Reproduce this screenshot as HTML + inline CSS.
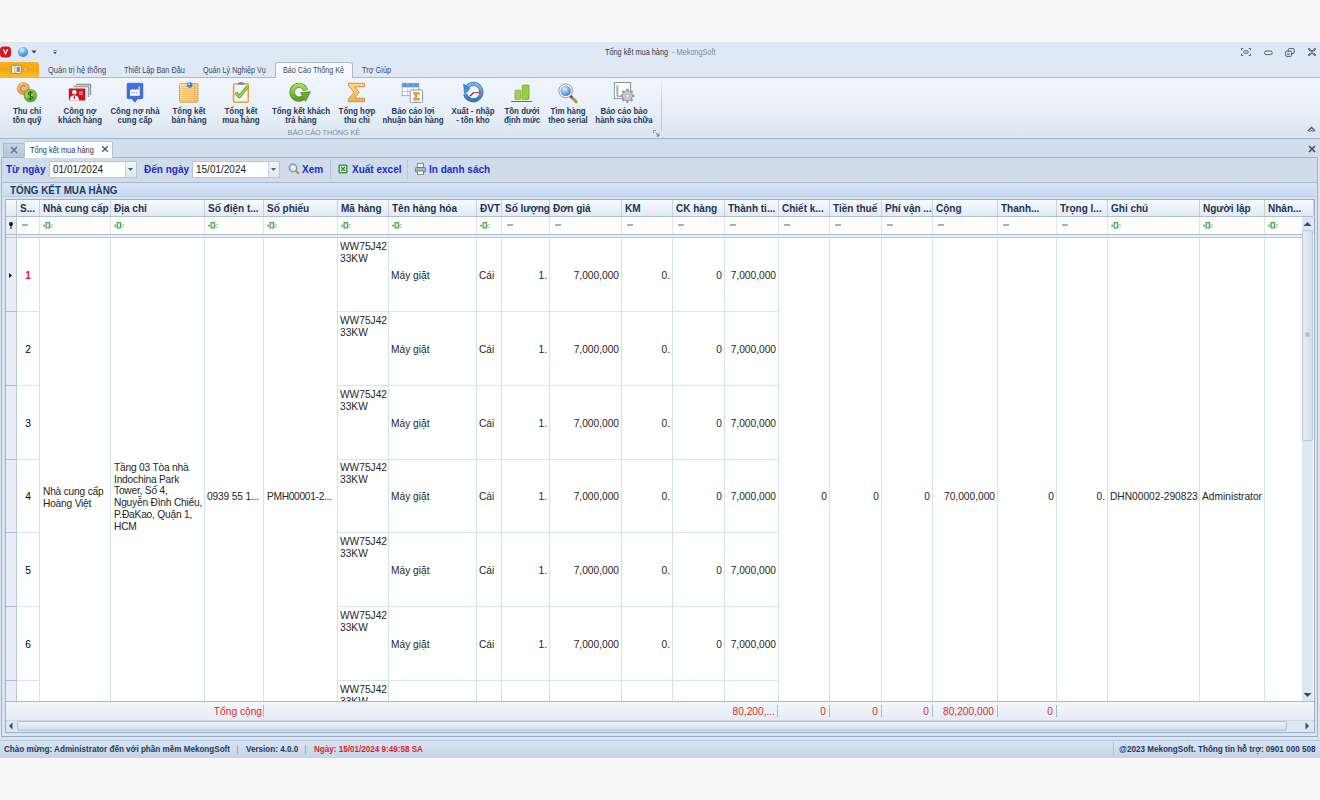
<!DOCTYPE html><html><head><meta charset="utf-8"><style>
*{box-sizing:border-box;margin:0;padding:0}
html,body{width:1320px;height:800px;overflow:hidden;background:#f8f8f8;font-family:"Liberation Sans",sans-serif;font-size:11px;color:#000}
.a{position:absolute;white-space:nowrap}
.t{position:absolute;white-space:nowrap;line-height:12px;font-size:10.2px;color:#262626}
.h{font-size:10px}
</style></head><body>
<div class="a" style="left:0;top:42px;width:1320px;height:716px;background:#dae5f2"></div>
<div class="a" style="left:0;top:42px;width:1320px;height:35px;background:#dfe9f5"></div>
<div class="a" style="left:0;top:77px;width:1320px;height:1px;background:#a9bacf"></div>
<div class="a" style="left:0;top:78px;width:1320px;height:60px;background:linear-gradient(#f1f6fc,#e8eff8 55%,#dae5f1)"></div>
<div class="a" style="left:0;top:138px;width:1320px;height:1px;background:#a3b4ca"></div>
<div class="a" style="left:0;top:139px;width:1320px;height:18px;background:#d2deed"></div>
<div class="a" style="left:1px;top:157px;width:1317px;height:580px;background:#d0dcec;border:1px solid #a2b4cb;border-bottom:2px solid #98abc3"></div>
<div class="a" style="left:0;top:740px;width:1320px;height:18px;background:linear-gradient(#d9e4f2,#c5d4e7);border-top:1px solid #b5c6dc"></div>
<svg class="a" style="left:0;top:46px" width="12" height="12" viewBox="0 0 12 12"><rect x="0" y="0.5" width="11" height="11" rx="3.5" fill="#d9141c"/><path d="M2.6 3 L5.5 9.3 L8.4 3 L7 3 L5.5 6.6 L4 3Z" fill="#fff"/></svg>
<svg class="a" style="left:17px;top:46px" width="12" height="12" viewBox="0 0 12 12"><defs><radialGradient id="bs" cx="0.4" cy="0.3" r="0.7"><stop offset="0" stop-color="#e8f6ff"/><stop offset="0.5" stop-color="#6fb6ec"/><stop offset="1" stop-color="#2d7fc6"/></radialGradient></defs><circle cx="6" cy="6" r="5" fill="url(#bs)"/></svg>
<svg class="a" style="left:31px;top:50px" width="6" height="4" viewBox="0 0 6 4"><path d="M0.5 0.5 L5.5 0.5 L3 3.5Z" fill="#2e3f57"/></svg>
<svg class="a" style="left:52px;top:49px" width="6" height="7" viewBox="0 0 6 7"><rect x="1.4" y="1" width="3.2" height="0.7" fill="#3a4a60"/><path d="M1.2 3 L4.8 3 L3 5.2Z" fill="#3a4a60"/></svg>
<div class="a" style="left:605px;top:46px;font-size:9.5px;line-height:11.5px;color:#303a48;font-weight:normal;transform:scaleX(0.77);transform-origin:0 0;">Tổng kết mua hàng</div>
<div class="a" style="left:672px;top:46px;font-size:9.5px;line-height:11.5px;color:#7a879b;font-weight:normal;transform:scaleX(0.77);transform-origin:0 0;">- MekongSoft</div>
<svg class="a" style="left:1241px;top:48px" width="10" height="8" viewBox="0 0 10 8"><g stroke="#525c6b" stroke-width="1" fill="none"><path d="M0.5 2.3V0.5H2.3M7.7 0.5H9.5V2.3M9.5 5.7V7.5H7.7M2.3 7.5H0.5V5.7"/><rect x="2.9" y="2.7" width="4.2" height="2.6" rx="0.9"/></g></svg>
<svg class="a" style="left:1264px;top:50px" width="9" height="6" viewBox="0 0 9 6"><rect x="0.6" y="1" width="7.6" height="3.6" rx="1.6" stroke="#525c6b" stroke-width="1" fill="none"/></svg>
<svg class="a" style="left:1285px;top:47.5px" width="10" height="9" viewBox="0 0 10 9"><g stroke="#525c6b" stroke-width="1" fill="#dfe9f5"><rect x="3.3" y="0.6" width="5.9" height="5" rx="1"/><rect x="0.6" y="3.2" width="5.9" height="5.2" rx="1"/></g><rect x="2" y="5.3" width="3" height="1.8" fill="#8a93a0"/></svg>
<svg class="a" style="left:1307.5px;top:48px" width="8" height="8" viewBox="0 0 8 8"><path d="M1 1 L7 7 M7 1 L1 7" stroke="#5a6472" stroke-width="1.9" stroke-linecap="round"/><path d="M1.6 1.6 L6.4 6.4 M6.4 1.6 L1.6 6.4" stroke="#c9d2dd" stroke-width="0.45"/></svg>
<div class="a" style="left:0;top:62px;width:39px;height:15px;background:linear-gradient(#f8b126,#f4a410 50%,#f9be2c);border-radius:0 3px 0 0"></div>
<svg class="a" style="left:10px;top:64px" width="20" height="11" viewBox="0 0 20 11"><rect x="1.6" y="1.3" width="9.6" height="8" rx="0.6" fill="#fff" stroke="#7a6a3a" stroke-width="0.7"/><rect x="4.6" y="1.6" width="0.6" height="7.4" fill="#6a5a30"/><rect x="6.6" y="2.6" width="3.3" height="5.4" fill="#8e8e86"/><path d="M13.3 4.3 L17.5 4.3 L15.4 7.1Z" fill="#fde9b0" stroke="#c98a20" stroke-width="0.5"/></svg>
<div class="a" style="left:275px;top:62px;width:78px;height:16px;background:linear-gradient(#fbfdff,#f1f6fc);border:1px solid #a9bacf;border-bottom:none;border-radius:3px 3px 0 0"></div>
<div class="a" style="left:48px;top:65px;font-size:9px;line-height:11px;color:#3a4a60;font-weight:normal;transform:scaleX(0.835);transform-origin:0 0;">Quản trị hệ thống</div>
<div class="a" style="left:124px;top:65px;font-size:9px;line-height:11px;color:#3a4a60;font-weight:normal;transform:scaleX(0.81);transform-origin:0 0;">Thiết Lập Ban Đầu</div>
<div class="a" style="left:203px;top:65px;font-size:9px;line-height:11px;color:#3a4a60;font-weight:normal;transform:scaleX(0.8);transform-origin:0 0;">Quản Lý Nghiệp Vụ</div>
<div class="a" style="left:283px;top:65px;font-size:9px;line-height:11px;color:#3a4a60;font-weight:normal;transform:scaleX(0.8);transform-origin:0 0;">Báo Cáo Thống Kê</div>
<div class="a" style="left:362px;top:65px;font-size:9px;line-height:11px;color:#3a4a60;font-weight:normal;transform:scaleX(0.82);transform-origin:0 0;">Trợ Giúp</div>
<div class="a" style="left:-33px;top:107px;width:120px;text-align:center;font-size:9px;line-height:9px;font-weight:bold;color:#26395a;transform:scaleX(0.88);transform-origin:50% 0">Thu chi<br>tồn quỹ</div>
<div class="a" style="left:19.5px;top:107px;width:120px;text-align:center;font-size:9px;line-height:9px;font-weight:bold;color:#26395a;transform:scaleX(0.88);transform-origin:50% 0">Công nợ<br>khách hàng</div>
<div class="a" style="left:75px;top:107px;width:120px;text-align:center;font-size:9px;line-height:9px;font-weight:bold;color:#26395a;transform:scaleX(0.88);transform-origin:50% 0">Công nợ nhà<br>cung cấp</div>
<div class="a" style="left:128.5px;top:107px;width:120px;text-align:center;font-size:9px;line-height:9px;font-weight:bold;color:#26395a;transform:scaleX(0.88);transform-origin:50% 0">Tổng kết<br>bán hàng</div>
<div class="a" style="left:180.5px;top:107px;width:120px;text-align:center;font-size:9px;line-height:9px;font-weight:bold;color:#26395a;transform:scaleX(0.88);transform-origin:50% 0">Tổng kết<br>mua hàng</div>
<div class="a" style="left:240.5px;top:107px;width:120px;text-align:center;font-size:9px;line-height:9px;font-weight:bold;color:#26395a;transform:scaleX(0.88);transform-origin:50% 0">Tổng kết khách<br>trả hàng</div>
<div class="a" style="left:296.5px;top:107px;width:120px;text-align:center;font-size:9px;line-height:9px;font-weight:bold;color:#26395a;transform:scaleX(0.88);transform-origin:50% 0">Tổng hợp<br>thu chi</div>
<div class="a" style="left:352.5px;top:107px;width:120px;text-align:center;font-size:9px;line-height:9px;font-weight:bold;color:#26395a;transform:scaleX(0.88);transform-origin:50% 0">Báo cáo lợi<br>nhuận bán hàng</div>
<div class="a" style="left:413px;top:107px;width:120px;text-align:center;font-size:9px;line-height:9px;font-weight:bold;color:#26395a;transform:scaleX(0.88);transform-origin:50% 0">Xuất - nhập<br>- tồn kho</div>
<div class="a" style="left:461.5px;top:107px;width:120px;text-align:center;font-size:9px;line-height:9px;font-weight:bold;color:#26395a;transform:scaleX(0.88);transform-origin:50% 0">Tồn dưới<br>định mức</div>
<div class="a" style="left:507.5px;top:107px;width:120px;text-align:center;font-size:9px;line-height:9px;font-weight:bold;color:#26395a;transform:scaleX(0.88);transform-origin:50% 0">Tìm hàng<br>theo serial</div>
<div class="a" style="left:564px;top:107px;width:120px;text-align:center;font-size:9px;line-height:9px;font-weight:bold;color:#26395a;transform:scaleX(0.88);transform-origin:50% 0">Báo cáo bảo<br>hành sửa chữa</div>
<div class="a" style="left:249px;top:128px;width:150px;text-align:center;font-size:8px;line-height:10px;color:#7b8ca4;transform:scaleX(0.9);transform-origin:50% 0">BÁO CÁO THỐNG KÊ</div>
<div class="a" style="left:661px;top:80px;width:1px;height:57px;background:linear-gradient(#e8eff8,#b9c8da 40%,#b9c8da 80%,#e0e8f2)"></div>
<svg class="a" style="left:653px;top:130px" width="7" height="7" viewBox="0 0 7 7"><path d="M0.5 0.5H3M0.5 0.5V3" stroke="#8595aa" stroke-width="1"/><path d="M2.5 2.5L6 6M6 3.5V6H3.5" stroke="#66778e" stroke-width="1" fill="none"/></svg>
<svg class="a" style="left:1307px;top:126px" width="9" height="7" viewBox="0 0 9 7"><path d="M1 5 L4.5 1.5 L8 5" stroke="#4d5766" stroke-width="1.3" fill="none"/><path d="M2.5 6 L4.5 4 L6.5 6" stroke="#4d5766" stroke-width="1" fill="none"/></svg>
<svg class="a" style="left:14px;top:80px" width="26" height="24" viewBox="0 0 26 24"><defs><radialGradient id="co" cx="0.4" cy="0.35" r="0.7"><stop offset="0" stop-color="#fbd39a"/><stop offset="1" stop-color="#e0913a"/></radialGradient><radialGradient id="cg" cx="0.4" cy="0.35" r="0.7"><stop offset="0" stop-color="#b8e070"/><stop offset="1" stop-color="#5e9e25"/></radialGradient></defs><circle cx="9.4" cy="8.7" r="6.2" fill="url(#co)" stroke="#d4893a" stroke-width="0.6"/><path d="M11.5 6.5 A3 3 0 1 0 11.5 11" stroke="#c97a2a" stroke-width="1.3" fill="none"/><circle cx="16.4" cy="15.7" r="6.3" fill="url(#cg)" stroke="#5a9422" stroke-width="0.7"/><path d="M18.6 12.8 C17.5 11.8 14.2 12 14.4 13.9 C14.6 15.6 18.6 15.2 18.6 17.4 C18.6 19.4 15.2 19.4 14 18.4 M16.4 11 V20.3" stroke="#2f6a12" stroke-width="1.3" fill="none"/></svg>
<svg class="a" style="left:66px;top:82px" width="28" height="22" viewBox="0 0 28 22"><path d="M10 2.5 H24.5 V13" stroke="#8e949c" stroke-width="1.4" fill="none"/><path d="M7.5 4.5 H22.5 V15" stroke="#9aa0a8" stroke-width="1.4" fill="none"/><rect x="2.8" y="6.5" width="16.5" height="12" rx="0.8" fill="#d0121a"/><circle cx="8.3" cy="10.3" r="2.3" fill="#fff"/><path d="M3.5 18.5 C3.8 14.8 5.6 13.6 8.3 13.6 C11 13.6 12.8 14.8 13 18.5Z" fill="#fff"/><path d="M8.3 13.5 L7.3 15.5 L8.3 17.3 L9.3 15.5Z" fill="#b01018"/><rect x="13" y="9.5" width="3.8" height="1.2" fill="#f5b0b0"/><rect x="13" y="11.6" width="3.8" height="1.2" fill="#f5b0b0"/></svg>
<svg class="a" style="left:125px;top:82px" width="20" height="22" viewBox="0 0 20 22"><path d="M3.2 1.2 H16.8 Q17.9 1.2 17.9 2.3 V15.6 Q17.9 16.7 16.8 16.7 H12.9 L9.8 20.3 L6.7 16.7 H3.2 Q2.1 16.7 2.1 15.6 V2.3 Q2.1 1.2 3.2 1.2Z" fill="#3f6fdc" stroke="#2f58b8" stroke-width="0.6"/><path d="M5 13.7 V8.2 L7.5 6.7 V8.2 L10 6.7 V8.2 L12.5 6.7 V8.2 L13.5 8.2 V4.5 H14.7 V13.7Z" fill="#fff"/><rect x="6.2" y="10" width="1.3" height="1.6" fill="#7d9be0"/><rect x="8.6" y="10" width="1.3" height="1.6" fill="#7d9be0"/><rect x="11" y="10" width="1.3" height="1.6" fill="#7d9be0"/></svg>
<svg class="a" style="left:177px;top:81px" width="24" height="24" viewBox="0 0 24 24"><defs><linearGradient id="np" x1="0" y1="0" x2="1" y2="1"><stop offset="0" stop-color="#fbe4a4"/><stop offset="1" stop-color="#f3c86a"/></linearGradient></defs><rect x="2.5" y="2.5" width="18.5" height="18.8" rx="1" fill="url(#np)" stroke="#c9a15a" stroke-width="0.9"/><rect x="3.5" y="5" width="16.5" height="0.7" fill="#e7b056" opacity="0.8"/><rect x="3.5" y="7" width="16.5" height="0.7" fill="#e7b056" opacity="0.8"/><rect x="3.5" y="9" width="16.5" height="0.7" fill="#e7b056" opacity="0.8"/><rect x="3.5" y="11" width="16.5" height="0.7" fill="#e7b056" opacity="0.8"/><rect x="3.5" y="13" width="16.5" height="0.7" fill="#e7b056" opacity="0.8"/><rect x="3.5" y="15" width="16.5" height="0.7" fill="#e7b056" opacity="0.8"/><rect x="3.5" y="17" width="16.5" height="0.7" fill="#e7b056" opacity="0.8"/><rect x="3.5" y="19" width="16.5" height="0.7" fill="#e7b056" opacity="0.8"/><rect x="17.3" y="3" width="0.6" height="18" fill="#e2a84c"/><circle cx="12.7" cy="4" r="2.8" fill="#3a7ad0"/><circle cx="12" cy="3.2" r="1" fill="#cfe5ff"/></svg>
<svg class="a" style="left:231px;top:81px" width="20" height="23" viewBox="0 0 20 23"><rect x="2.6" y="2.8" width="14.7" height="18.4" rx="1.2" fill="#f2f4f7" stroke="#e5a443" stroke-width="1.6"/><path d="M6.2 3.8 Q6.5 1 10 1 Q13.5 1 13.8 3.8Z" fill="#7e8a9c"/><path d="M4.8 11.6 L8.2 15.8 L16.8 5.2" stroke="#5a9e26" stroke-width="3.2" fill="none" stroke-linejoin="round"/><path d="M4.8 11.6 L8.2 15.8 L16.8 5.2" stroke="#9bd24c" stroke-width="1.8" fill="none" stroke-linejoin="round"/></svg>
<svg class="a" style="left:288px;top:82px" width="24" height="22" viewBox="0 0 24 22"><defs><linearGradient id="gr" x1="0" y1="0" x2="0" y2="1"><stop offset="0" stop-color="#a6dc5c"/><stop offset="1" stop-color="#5d9f24"/></linearGradient></defs><path d="M15.2 15.6 A6.9 6.9 0 1 1 17.6 8.4" stroke="#4f8a22" stroke-width="5.2" fill="none"/><path d="M15.2 15.6 A6.9 6.9 0 1 1 17.6 8.4" stroke="url(#gr)" stroke-width="3.8" fill="none"/><path d="M12.6 10.6 L22.6 9.8 L17.5 19.5Z" fill="#6aaa2c" stroke="#4f8a22" stroke-width="0.7" stroke-linejoin="round"/></svg>
<svg class="a" style="left:345px;top:81px" width="22" height="23" viewBox="0 0 22 23"><defs><linearGradient id="sg" x1="0" y1="0" x2="0" y2="1"><stop offset="0" stop-color="#fbd888"/><stop offset="1" stop-color="#f0b44e"/></linearGradient></defs><path d="M3.3 2.3 H19.6 V5.8 H9.8 L14.2 11.3 L9.6 17.3 H19.6 V20.7 H3.3 V18.2 L9.2 11.3 L3.3 4.6Z" fill="url(#sg)" stroke="#c88c33" stroke-width="0.9" stroke-linejoin="round"/></svg>
<svg class="a" style="left:400px;top:81px" width="25" height="23" viewBox="0 0 25 23"><rect x="2.2" y="2.3" width="16.6" height="12.4" fill="#fff" stroke="#8aa2c2" stroke-width="0.8"/><rect x="2.2" y="2.3" width="16.6" height="4" fill="#5b9ad6"/><path d="M2.2 10.5 H18.8 M7.8 2.3 V14.7 M13.3 2.3 V14.7" stroke="#9db3d0" stroke-width="0.7"/><rect x="10.2" y="9" width="12.4" height="12.5" rx="1.2" fill="#fff" stroke="#8796ad" stroke-width="1"/><path d="M13.3 11.5 H19.5 V13.2 H16 L17.6 15.3 L16 17.3 H19.5 V19.2 H13.3 V18.3 L15.4 15.3 L13.3 12.4Z" fill="#eda23a" stroke="#c98222" stroke-width="0.5"/></svg>
<svg class="a" style="left:461px;top:81px" width="24" height="23" viewBox="0 0 24 23"><defs><linearGradient id="ca" x1="0" y1="0" x2="0" y2="1"><stop offset="0" stop-color="#7db6ee"/><stop offset="1" stop-color="#3577c4"/></linearGradient></defs><path d="M5.5 6.3 A8.2 8.2 0 1 1 4.2 13" stroke="#2f6cb6" stroke-width="4" fill="none"/><path d="M5.5 6.3 A8.2 8.2 0 1 1 4.2 13" stroke="url(#ca)" stroke-width="2.8" fill="none"/><path d="M2.6 3 L3.5 12.5 L10.2 8.3Z" fill="#4a8ad4" stroke="#2f6cb6" stroke-width="0.6"/><circle cx="12.7" cy="11.6" r="5.4" fill="#f2f6fb"/><path d="M12.7 11.6 L20 11.4" stroke="#e0333a" stroke-width="1"/><path d="M12.7 11.6 L8.6 15.3" stroke="#222" stroke-width="1.1"/></svg>
<svg class="a" style="left:510px;top:83px" width="24" height="20" viewBox="0 0 24 20"><rect x="5" y="7.2" width="5.9" height="9.4" rx="1" fill="#a3d14f" stroke="#7aa83a" stroke-width="0.8"/><rect x="12.2" y="2" width="6.8" height="14.6" rx="1" fill="#99cc42" stroke="#74a334" stroke-width="0.8"/><rect x="1.3" y="18" width="20.8" height="1" fill="#5d6b8a"/></svg>
<svg class="a" style="left:556px;top:81px" width="24" height="23" viewBox="0 0 24 23"><defs><radialGradient id="mg" cx="0.4" cy="0.35" r="0.7"><stop offset="0" stop-color="#e8f2ff"/><stop offset="0.45" stop-color="#8fb8ee"/><stop offset="1" stop-color="#3d74c8"/></radialGradient></defs><path d="M14.6 15.3 L20.2 20.8" stroke="#c38a3e" stroke-width="3" stroke-linecap="round"/><path d="M14 14.7 L16 16.7" stroke="#3d5a8e" stroke-width="2.6"/><circle cx="9.7" cy="9.8" r="6.9" fill="#fff" stroke="#7f8aa6" stroke-width="0.9"/><circle cx="9.7" cy="9.8" r="5.3" fill="url(#mg)"/></svg>
<svg class="a" style="left:612px;top:80px" width="26" height="24" viewBox="0 0 26 24"><rect x="2.3" y="2.5" width="16.3" height="16" fill="#fff" stroke="#8c939c" stroke-width="1"/><path d="M5 5 V16.3 H9" stroke="#7a818a" stroke-width="0.8" fill="none"/><rect x="5" y="6.5" width="1.6" height="0.7" fill="#7a818a"/><rect x="5" y="8.3" width="1.6" height="0.7" fill="#7a818a"/><rect x="5" y="10.1" width="1.6" height="0.7" fill="#7a818a"/><rect x="5" y="11.9" width="1.6" height="0.7" fill="#7a818a"/><rect x="5" y="13.7" width="1.6" height="0.7" fill="#7a818a"/><rect x="5" y="15.5" width="1.6" height="0.7" fill="#7a818a"/><rect x="14.2" y="8.7" width="2.4" height="3.2" fill="#9aa0a8" transform="rotate(0 15.4 15.8)"/><rect x="14.2" y="8.7" width="2.4" height="3.2" fill="#9aa0a8" transform="rotate(45 15.4 15.8)"/><rect x="14.2" y="8.7" width="2.4" height="3.2" fill="#9aa0a8" transform="rotate(90 15.4 15.8)"/><rect x="14.2" y="8.7" width="2.4" height="3.2" fill="#9aa0a8" transform="rotate(135 15.4 15.8)"/><rect x="14.2" y="8.7" width="2.4" height="3.2" fill="#9aa0a8" transform="rotate(180 15.4 15.8)"/><rect x="14.2" y="8.7" width="2.4" height="3.2" fill="#9aa0a8" transform="rotate(225 15.4 15.8)"/><rect x="14.2" y="8.7" width="2.4" height="3.2" fill="#9aa0a8" transform="rotate(270 15.4 15.8)"/><rect x="14.2" y="8.7" width="2.4" height="3.2" fill="#9aa0a8" transform="rotate(315 15.4 15.8)"/><circle cx="15.4" cy="15.8" r="5" fill="#c6cbd2" stroke="#8a9098" stroke-width="0.9"/><circle cx="15.4" cy="15.8" r="1.6" fill="#fff" stroke="#8a9098" stroke-width="0.6"/></svg>
<div class="a" style="left:3px;top:143px;width:22px;height:14px;background:linear-gradient(#c4d3e6,#b4c6dd);border:1px solid #a9bbd2;border-bottom:none"></div>
<svg class="a" style="left:10px;top:146px" width="8" height="8" viewBox="0 0 8 8"><path d="M1 1L7 7M7 1L1 7" stroke="#5c6a7c" stroke-width="1.3"/></svg>
<div class="a" style="left:24px;top:141px;width:89px;height:17px;background:#fbfdff;border:1px solid #b4c4d8;border-bottom:none;border-radius:2px 2px 0 0"></div>
<div class="a" style="left:30px;top:144px;font-size:9.5px;line-height:11.5px;color:#333b47;font-weight:normal;transform:scaleX(0.78);transform-origin:0 0;">Tổng kết mua hàng</div>
<svg class="a" style="left:101px;top:145px" width="8" height="8" viewBox="0 0 8 8"><path d="M1.2 1.2L6.8 6.8M6.8 1.2L1.2 6.8" stroke="#4a5566" stroke-width="1.25"/></svg>
<svg class="a" style="left:1308px;top:145px" width="8" height="8" viewBox="0 0 8 8"><path d="M1 1L7 7M7 1L1 7" stroke="#3d4756" stroke-width="1.5"/></svg>
<div class="a" style="left:6px;top:164px;font-size:10px;line-height:12px;font-weight:bold;color:#1c2ccf">Từ ngày</div>
<div class="a" style="left:144px;top:164px;font-size:10px;line-height:12px;font-weight:bold;color:#1c2ccf">Đến ngày</div>
<div class="a" style="left:49px;top:161px;width:88px;height:17px;background:#fff;border:1px solid #b7c6d8"></div>
<div class="a" style="left:125px;top:162px;width:11px;height:15px;background:linear-gradient(#f3f6fa,#e1e8f1);border-left:1px solid #c6d3e2"></div>
<svg class="a" style="left:128px;top:168px" width="5" height="3" viewBox="0 0 5 3"><path d="M0 0H5L2.5 3Z" fill="#4b5a6e"/></svg>
<div class="a" style="left:53px;top:164px;font-size:10px;line-height:12px;color:#222">01/01/2024</div>
<div class="a" style="left:192px;top:161px;width:88px;height:17px;background:#fff;border:1px solid #b7c6d8"></div>
<div class="a" style="left:268px;top:162px;width:11px;height:15px;background:linear-gradient(#f3f6fa,#e1e8f1);border-left:1px solid #c6d3e2"></div>
<svg class="a" style="left:271px;top:168px" width="5" height="3" viewBox="0 0 5 3"><path d="M0 0H5L2.5 3Z" fill="#4b5a6e"/></svg>
<div class="a" style="left:196px;top:164px;font-size:10px;line-height:12px;color:#222">15/01/2024</div>
<svg class="a" style="left:288px;top:163px" width="12" height="13" viewBox="0 0 12 13"><circle cx="5" cy="5" r="3.8" fill="#cfe3f7" stroke="#6e8eb5" stroke-width="1.2"/><circle cx="4.2" cy="4.2" r="1.5" fill="#fff"/><path d="M7.8 7.8 L11 11" stroke="#c8893a" stroke-width="2"/></svg>
<div class="a" style="left:302px;top:164px;font-size:10px;line-height:12px;font-weight:bold;color:#1c2ccf">Xem</div>
<div class="a" style="left:330px;top:160px;width:1px;height:19px;background:#b9c8da"></div>
<svg class="a" style="left:338px;top:164px" width="10" height="10" viewBox="0 0 10 10"><rect x="0.5" y="0.5" width="9" height="9" rx="1" fill="#3f9b3f"/><rect x="2" y="2" width="6" height="6" fill="#e7f5e7"/><path d="M3 3L7 7M7 3L3 7" stroke="#2b8a2b" stroke-width="1.2"/></svg>
<div class="a" style="left:352px;top:164px;font-size:10px;line-height:12px;font-weight:bold;color:#1c2ccf">Xuất excel</div>
<div class="a" style="left:407px;top:160px;width:1px;height:19px;background:#b9c8da"></div>
<svg class="a" style="left:415px;top:163px" width="11" height="12" viewBox="0 0 11 12"><rect x="2.5" y="0.5" width="6" height="4" fill="#fff" stroke="#6b7686" stroke-width="0.8"/><rect x="0.5" y="4.5" width="10" height="4.5" rx="1" fill="#aab4c0" stroke="#5d6878" stroke-width="0.8"/><rect x="2.5" y="8" width="6" height="3.5" fill="#fff" stroke="#6b7686" stroke-width="0.8"/></svg>
<div class="a" style="left:429px;top:164px;font-size:10px;line-height:12px;font-weight:bold;color:#1c2ccf">In danh sách</div>
<div class="a" style="left:4px;top:743.5px;font-size:9px;line-height:11px;font-weight:bold;color:#1e395b;transform:scaleX(0.9);transform-origin:0 0">Chào mừng: Administrator đến với phần mềm MekongSoft</div>
<div class="a" style="left:237px;top:745px;width:1px;height:9px;background:#9fb0c6"></div>
<div class="a" style="left:246px;top:743.5px;font-size:9px;line-height:11px;font-weight:bold;color:#1e395b;transform:scaleX(0.9);transform-origin:0 0">Version: 4.0.0</div>
<div class="a" style="left:305px;top:745px;width:1px;height:9px;background:#9fb0c6"></div>
<div class="a" style="left:314px;top:743.5px;font-size:9px;line-height:11px;font-weight:bold;color:#e01b24;transform:scaleX(0.9);transform-origin:0 0">Ngày: 15/01/2024 9:49:58 SA</div>
<div class="a" style="left:1113px;top:742px;width:1px;height:14px;background:#b4c3d6"></div>
<div class="a" style="left:1119px;top:743.5px;font-size:9px;line-height:11px;font-weight:bold;color:#1e395b;transform:scaleX(0.9);transform-origin:0 0">@2023 MekongSoft. Thông tin hỗ trợ: 0901 000 508</div>
<div class="a" style="left:2px;top:182px;width:1315px;height:554px;background:#d9e4f2;border-top:1px solid #a8bad0"></div>
<div class="a" style="left:3px;top:183px;width:1313px;height:14px;background:linear-gradient(#d8e6f8,#c7d9f1);border-bottom:1px solid #b8c9de"></div>
<div class="t" style="left:10px;top:182.5px;font-weight:bold;color:#1e395b;font-size:10.6px;line-height:14px;transform:scaleX(0.93);transform-origin:0 0">TỔNG KẾT MUA HÀNG</div>
<div class="a" style="left:5px;top:199px;width:1310px;height:534px;background:#fff;border:1px solid #9db0c8"></div>
<div class="a" style="left:6px;top:200px;width:1307px;height:16px;background:linear-gradient(#f7f9fc,#e3eaf3)"></div>
<div class="a" style="left:6px;top:216px;width:1307px;height:1px;background:#aebfd4"></div>
<div class="a" style="left:16px;top:200px;width:1px;height:16px;background:#c4d2e2"></div>
<div class="a" style="left:39px;top:200px;width:1px;height:16px;background:#c4d2e2"></div>
<div class="a" style="left:110px;top:200px;width:1px;height:16px;background:#c4d2e2"></div>
<div class="a" style="left:204px;top:200px;width:1px;height:16px;background:#c4d2e2"></div>
<div class="a" style="left:263px;top:200px;width:1px;height:16px;background:#c4d2e2"></div>
<div class="a" style="left:337px;top:200px;width:1px;height:16px;background:#c4d2e2"></div>
<div class="a" style="left:388px;top:200px;width:1px;height:16px;background:#c4d2e2"></div>
<div class="a" style="left:476px;top:200px;width:1px;height:16px;background:#c4d2e2"></div>
<div class="a" style="left:501px;top:200px;width:1px;height:16px;background:#c4d2e2"></div>
<div class="a" style="left:549px;top:200px;width:1px;height:16px;background:#c4d2e2"></div>
<div class="a" style="left:621px;top:200px;width:1px;height:16px;background:#c4d2e2"></div>
<div class="a" style="left:672px;top:200px;width:1px;height:16px;background:#c4d2e2"></div>
<div class="a" style="left:724px;top:200px;width:1px;height:16px;background:#c4d2e2"></div>
<div class="a" style="left:778px;top:200px;width:1px;height:16px;background:#c4d2e2"></div>
<div class="a" style="left:829px;top:200px;width:1px;height:16px;background:#c4d2e2"></div>
<div class="a" style="left:881px;top:200px;width:1px;height:16px;background:#c4d2e2"></div>
<div class="a" style="left:932px;top:200px;width:1px;height:16px;background:#c4d2e2"></div>
<div class="a" style="left:997px;top:200px;width:1px;height:16px;background:#c4d2e2"></div>
<div class="a" style="left:1056px;top:200px;width:1px;height:16px;background:#c4d2e2"></div>
<div class="a" style="left:1107px;top:200px;width:1px;height:16px;background:#c4d2e2"></div>
<div class="a" style="left:1199px;top:200px;width:1px;height:16px;background:#c4d2e2"></div>
<div class="a" style="left:1264px;top:200px;width:1px;height:16px;background:#c4d2e2"></div>
<div class="a" style="left:1313px;top:200px;width:1px;height:16px;background:#c4d2e2"></div>
<div class="t h" style="left:20px;top:203px;font-weight:bold;color:#1b3354">S...</div>
<div class="t h" style="left:43px;top:203px;font-weight:bold;color:#1b3354">Nhà cung cấp</div>
<div class="t h" style="left:114px;top:203px;font-weight:bold;color:#1b3354">Địa chỉ</div>
<div class="t h" style="left:208px;top:203px;font-weight:bold;color:#1b3354">Số điện t...</div>
<div class="t h" style="left:267px;top:203px;font-weight:bold;color:#1b3354">Số phiếu</div>
<div class="t h" style="left:341px;top:203px;font-weight:bold;color:#1b3354">Mã hàng</div>
<div class="t h" style="left:392px;top:203px;font-weight:bold;color:#1b3354">Tên hàng hóa</div>
<div class="t h" style="left:480px;top:203px;font-weight:bold;color:#1b3354">ĐVT</div>
<div class="t h" style="left:505px;top:203px;font-weight:bold;color:#1b3354">Số lượng</div>
<div class="t h" style="left:553px;top:203px;font-weight:bold;color:#1b3354">Đơn giá</div>
<div class="t h" style="left:625px;top:203px;font-weight:bold;color:#1b3354">KM</div>
<div class="t h" style="left:676px;top:203px;font-weight:bold;color:#1b3354">CK hàng</div>
<div class="t h" style="left:728px;top:203px;font-weight:bold;color:#1b3354">Thành ti...</div>
<div class="t h" style="left:782px;top:203px;font-weight:bold;color:#1b3354">Chiết k...</div>
<div class="t h" style="left:833px;top:203px;font-weight:bold;color:#1b3354">Tiền thuế</div>
<div class="t h" style="left:885px;top:203px;font-weight:bold;color:#1b3354">Phí vận ...</div>
<div class="t h" style="left:936px;top:203px;font-weight:bold;color:#1b3354">Cộng</div>
<div class="t h" style="left:1001px;top:203px;font-weight:bold;color:#1b3354">Thanh...</div>
<div class="t h" style="left:1060px;top:203px;font-weight:bold;color:#1b3354">Trọng l...</div>
<div class="t h" style="left:1111px;top:203px;font-weight:bold;color:#1b3354">Ghi chú</div>
<div class="t h" style="left:1203px;top:203px;font-weight:bold;color:#1b3354">Người lập</div>
<div class="t h" style="left:1268px;top:203px;font-weight:bold;color:#1b3354">Nhân...</div>
<div class="a" style="left:6px;top:217px;width:1307px;height:17px;background:#fff"></div>
<div class="a" style="left:6px;top:217px;width:10px;height:17px;background:#e6edf6"></div>
<div class="a" style="left:6px;top:234px;width:1307px;height:1px;background:#aebfd4"></div>
<div class="a" style="left:6px;top:235px;width:1307px;height:3px;background:#e7eef7;border-bottom:1px solid #bccbdd"></div>
<div class="a" style="left:16px;top:217px;width:1px;height:17px;background:#dde6f1"></div>
<div class="a" style="left:39px;top:217px;width:1px;height:17px;background:#dde6f1"></div>
<div class="a" style="left:110px;top:217px;width:1px;height:17px;background:#dde6f1"></div>
<div class="a" style="left:204px;top:217px;width:1px;height:17px;background:#dde6f1"></div>
<div class="a" style="left:263px;top:217px;width:1px;height:17px;background:#dde6f1"></div>
<div class="a" style="left:337px;top:217px;width:1px;height:17px;background:#dde6f1"></div>
<div class="a" style="left:388px;top:217px;width:1px;height:17px;background:#dde6f1"></div>
<div class="a" style="left:476px;top:217px;width:1px;height:17px;background:#dde6f1"></div>
<div class="a" style="left:501px;top:217px;width:1px;height:17px;background:#dde6f1"></div>
<div class="a" style="left:549px;top:217px;width:1px;height:17px;background:#dde6f1"></div>
<div class="a" style="left:621px;top:217px;width:1px;height:17px;background:#dde6f1"></div>
<div class="a" style="left:672px;top:217px;width:1px;height:17px;background:#dde6f1"></div>
<div class="a" style="left:724px;top:217px;width:1px;height:17px;background:#dde6f1"></div>
<div class="a" style="left:778px;top:217px;width:1px;height:17px;background:#dde6f1"></div>
<div class="a" style="left:829px;top:217px;width:1px;height:17px;background:#dde6f1"></div>
<div class="a" style="left:881px;top:217px;width:1px;height:17px;background:#dde6f1"></div>
<div class="a" style="left:932px;top:217px;width:1px;height:17px;background:#dde6f1"></div>
<div class="a" style="left:997px;top:217px;width:1px;height:17px;background:#dde6f1"></div>
<div class="a" style="left:1056px;top:217px;width:1px;height:17px;background:#dde6f1"></div>
<div class="a" style="left:1107px;top:217px;width:1px;height:17px;background:#dde6f1"></div>
<div class="a" style="left:1199px;top:217px;width:1px;height:17px;background:#dde6f1"></div>
<div class="a" style="left:1264px;top:217px;width:1px;height:17px;background:#dde6f1"></div>
<div class="a" style="left:1313px;top:217px;width:1px;height:17px;background:#dde6f1"></div>
<div class="a" style="left:22px;top:224px;width:6px;height:2px;background:#a3b0c0"></div>
<svg class="a" style="left:42.5px;top:220px" width="12" height="10" viewBox="0 0 12 10"><rect x="0.3" y="4.5" width="1.6" height="2.5" fill="#8d9aab"/><rect x="2.5" y="2" width="4.6" height="6.6" rx="0.5" fill="#44b044"/><rect x="3.8" y="3.3" width="2" height="4" fill="#f2fff2"/><path d="M9.8 4.6 A1.4 1.5 0 1 0 9.8 6.9" stroke="#8d9aab" stroke-width="0.8" fill="none"/></svg>
<svg class="a" style="left:113.5px;top:220px" width="12" height="10" viewBox="0 0 12 10"><rect x="0.3" y="4.5" width="1.6" height="2.5" fill="#8d9aab"/><rect x="2.5" y="2" width="4.6" height="6.6" rx="0.5" fill="#44b044"/><rect x="3.8" y="3.3" width="2" height="4" fill="#f2fff2"/><path d="M9.8 4.6 A1.4 1.5 0 1 0 9.8 6.9" stroke="#8d9aab" stroke-width="0.8" fill="none"/></svg>
<svg class="a" style="left:207.5px;top:220px" width="12" height="10" viewBox="0 0 12 10"><rect x="0.3" y="4.5" width="1.6" height="2.5" fill="#8d9aab"/><rect x="2.5" y="2" width="4.6" height="6.6" rx="0.5" fill="#44b044"/><rect x="3.8" y="3.3" width="2" height="4" fill="#f2fff2"/><path d="M9.8 4.6 A1.4 1.5 0 1 0 9.8 6.9" stroke="#8d9aab" stroke-width="0.8" fill="none"/></svg>
<svg class="a" style="left:266.5px;top:220px" width="12" height="10" viewBox="0 0 12 10"><rect x="0.3" y="4.5" width="1.6" height="2.5" fill="#8d9aab"/><rect x="2.5" y="2" width="4.6" height="6.6" rx="0.5" fill="#44b044"/><rect x="3.8" y="3.3" width="2" height="4" fill="#f2fff2"/><path d="M9.8 4.6 A1.4 1.5 0 1 0 9.8 6.9" stroke="#8d9aab" stroke-width="0.8" fill="none"/></svg>
<svg class="a" style="left:340.5px;top:220px" width="12" height="10" viewBox="0 0 12 10"><rect x="0.3" y="4.5" width="1.6" height="2.5" fill="#8d9aab"/><rect x="2.5" y="2" width="4.6" height="6.6" rx="0.5" fill="#44b044"/><rect x="3.8" y="3.3" width="2" height="4" fill="#f2fff2"/><path d="M9.8 4.6 A1.4 1.5 0 1 0 9.8 6.9" stroke="#8d9aab" stroke-width="0.8" fill="none"/></svg>
<svg class="a" style="left:391.5px;top:220px" width="12" height="10" viewBox="0 0 12 10"><rect x="0.3" y="4.5" width="1.6" height="2.5" fill="#8d9aab"/><rect x="2.5" y="2" width="4.6" height="6.6" rx="0.5" fill="#44b044"/><rect x="3.8" y="3.3" width="2" height="4" fill="#f2fff2"/><path d="M9.8 4.6 A1.4 1.5 0 1 0 9.8 6.9" stroke="#8d9aab" stroke-width="0.8" fill="none"/></svg>
<svg class="a" style="left:479.5px;top:220px" width="12" height="10" viewBox="0 0 12 10"><rect x="0.3" y="4.5" width="1.6" height="2.5" fill="#8d9aab"/><rect x="2.5" y="2" width="4.6" height="6.6" rx="0.5" fill="#44b044"/><rect x="3.8" y="3.3" width="2" height="4" fill="#f2fff2"/><path d="M9.8 4.6 A1.4 1.5 0 1 0 9.8 6.9" stroke="#8d9aab" stroke-width="0.8" fill="none"/></svg>
<div class="a" style="left:507px;top:224px;width:6px;height:2px;background:#a3b0c0"></div>
<div class="a" style="left:555px;top:224px;width:6px;height:2px;background:#a3b0c0"></div>
<div class="a" style="left:627px;top:224px;width:6px;height:2px;background:#a3b0c0"></div>
<div class="a" style="left:678px;top:224px;width:6px;height:2px;background:#a3b0c0"></div>
<div class="a" style="left:730px;top:224px;width:6px;height:2px;background:#a3b0c0"></div>
<div class="a" style="left:784px;top:224px;width:6px;height:2px;background:#a3b0c0"></div>
<div class="a" style="left:835px;top:224px;width:6px;height:2px;background:#a3b0c0"></div>
<div class="a" style="left:887px;top:224px;width:6px;height:2px;background:#a3b0c0"></div>
<div class="a" style="left:938px;top:224px;width:6px;height:2px;background:#a3b0c0"></div>
<div class="a" style="left:1003px;top:224px;width:6px;height:2px;background:#a3b0c0"></div>
<div class="a" style="left:1062px;top:224px;width:6px;height:2px;background:#a3b0c0"></div>
<svg class="a" style="left:1110.5px;top:220px" width="12" height="10" viewBox="0 0 12 10"><rect x="0.3" y="4.5" width="1.6" height="2.5" fill="#8d9aab"/><rect x="2.5" y="2" width="4.6" height="6.6" rx="0.5" fill="#44b044"/><rect x="3.8" y="3.3" width="2" height="4" fill="#f2fff2"/><path d="M9.8 4.6 A1.4 1.5 0 1 0 9.8 6.9" stroke="#8d9aab" stroke-width="0.8" fill="none"/></svg>
<svg class="a" style="left:1202.5px;top:220px" width="12" height="10" viewBox="0 0 12 10"><rect x="0.3" y="4.5" width="1.6" height="2.5" fill="#8d9aab"/><rect x="2.5" y="2" width="4.6" height="6.6" rx="0.5" fill="#44b044"/><rect x="3.8" y="3.3" width="2" height="4" fill="#f2fff2"/><path d="M9.8 4.6 A1.4 1.5 0 1 0 9.8 6.9" stroke="#8d9aab" stroke-width="0.8" fill="none"/></svg>
<svg class="a" style="left:1267.5px;top:220px" width="12" height="10" viewBox="0 0 12 10"><rect x="0.3" y="4.5" width="1.6" height="2.5" fill="#8d9aab"/><rect x="2.5" y="2" width="4.6" height="6.6" rx="0.5" fill="#44b044"/><rect x="3.8" y="3.3" width="2" height="4" fill="#f2fff2"/><path d="M9.8 4.6 A1.4 1.5 0 1 0 9.8 6.9" stroke="#8d9aab" stroke-width="0.8" fill="none"/></svg>
<svg class="a" style="left:7px;top:221px" width="8" height="9" viewBox="0 0 8 9"><circle cx="4" cy="3" r="2" fill="#111"/><rect x="3.5" y="4" width="1" height="4" fill="#111"/></svg>
<div class="a" style="left:6px;top:238px;width:10px;height:463px;background:#e6edf6"></div>
<div class="a" style="left:16px;top:238px;width:1px;height:463px;background:#d5e1f1"></div>
<div class="a" style="left:39px;top:238px;width:1px;height:463px;background:#d5e1f1"></div>
<div class="a" style="left:110px;top:238px;width:1px;height:463px;background:#d5e1f1"></div>
<div class="a" style="left:204px;top:238px;width:1px;height:463px;background:#d5e1f1"></div>
<div class="a" style="left:263px;top:238px;width:1px;height:463px;background:#d5e1f1"></div>
<div class="a" style="left:337px;top:238px;width:1px;height:463px;background:#d5e1f1"></div>
<div class="a" style="left:388px;top:238px;width:1px;height:463px;background:#d5e1f1"></div>
<div class="a" style="left:476px;top:238px;width:1px;height:463px;background:#d5e1f1"></div>
<div class="a" style="left:501px;top:238px;width:1px;height:463px;background:#d5e1f1"></div>
<div class="a" style="left:549px;top:238px;width:1px;height:463px;background:#d5e1f1"></div>
<div class="a" style="left:621px;top:238px;width:1px;height:463px;background:#d5e1f1"></div>
<div class="a" style="left:672px;top:238px;width:1px;height:463px;background:#d5e1f1"></div>
<div class="a" style="left:724px;top:238px;width:1px;height:463px;background:#d5e1f1"></div>
<div class="a" style="left:778px;top:238px;width:1px;height:463px;background:#d5e1f1"></div>
<div class="a" style="left:829px;top:238px;width:1px;height:463px;background:#d5e1f1"></div>
<div class="a" style="left:881px;top:238px;width:1px;height:463px;background:#d5e1f1"></div>
<div class="a" style="left:932px;top:238px;width:1px;height:463px;background:#d5e1f1"></div>
<div class="a" style="left:997px;top:238px;width:1px;height:463px;background:#d5e1f1"></div>
<div class="a" style="left:1056px;top:238px;width:1px;height:463px;background:#d5e1f1"></div>
<div class="a" style="left:1107px;top:238px;width:1px;height:463px;background:#d5e1f1"></div>
<div class="a" style="left:1199px;top:238px;width:1px;height:463px;background:#d5e1f1"></div>
<div class="a" style="left:1264px;top:238px;width:1px;height:463px;background:#d5e1f1"></div>
<div class="a" style="left:16px;top:199px;width:1px;height:502px;background:#b9c8da"></div>
<div class="a" style="left:6px;top:311px;width:11px;height:1px;background:#aebdd0"></div>
<div class="a" style="left:17px;top:311px;width:22px;height:1px;background:#d9e4f2"></div>
<div class="a" style="left:338px;top:311px;width:440px;height:1px;background:#d9e4f2"></div>
<div class="a" style="left:6px;top:385px;width:11px;height:1px;background:#aebdd0"></div>
<div class="a" style="left:17px;top:385px;width:22px;height:1px;background:#d9e4f2"></div>
<div class="a" style="left:338px;top:385px;width:440px;height:1px;background:#d9e4f2"></div>
<div class="a" style="left:6px;top:459px;width:11px;height:1px;background:#aebdd0"></div>
<div class="a" style="left:17px;top:459px;width:22px;height:1px;background:#d9e4f2"></div>
<div class="a" style="left:338px;top:459px;width:440px;height:1px;background:#d9e4f2"></div>
<div class="a" style="left:6px;top:532px;width:11px;height:1px;background:#aebdd0"></div>
<div class="a" style="left:17px;top:532px;width:22px;height:1px;background:#d9e4f2"></div>
<div class="a" style="left:338px;top:532px;width:440px;height:1px;background:#d9e4f2"></div>
<div class="a" style="left:6px;top:606px;width:11px;height:1px;background:#aebdd0"></div>
<div class="a" style="left:17px;top:606px;width:22px;height:1px;background:#d9e4f2"></div>
<div class="a" style="left:338px;top:606px;width:440px;height:1px;background:#d9e4f2"></div>
<div class="a" style="left:6px;top:680px;width:11px;height:1px;background:#aebdd0"></div>
<div class="a" style="left:17px;top:680px;width:22px;height:1px;background:#d9e4f2"></div>
<div class="a" style="left:338px;top:680px;width:440px;height:1px;background:#d9e4f2"></div>
<div class="t" style="left:17px;width:22px;text-align:center;top:270px;color:#e02020;font-weight:bold">1</div>
<div class="t" style="left:391px;top:270px">Máy giặt</div>
<div class="t" style="left:479px;top:270px">Cái</div>
<div class="t" style="left:501px;width:46px;text-align:right;top:270px">1.</div>
<div class="t" style="left:549px;width:70px;text-align:right;top:270px">7,000,000</div>
<div class="t" style="left:621px;width:49px;text-align:right;top:270px">0.</div>
<div class="t" style="left:672px;width:50px;text-align:right;top:270px">0</div>
<div class="t" style="left:724px;width:52px;text-align:right;top:270px">7,000,000</div>
<div class="t" style="left:340px;top:241px;line-height:11.6px;overflow:hidden;height:24px;white-space:normal;width:50px">WW75J42<br>33KW</div>
<div class="t" style="left:17px;width:22px;text-align:center;top:344px;color:#000;font-weight:normal">2</div>
<div class="t" style="left:391px;top:344px">Máy giặt</div>
<div class="t" style="left:479px;top:344px">Cái</div>
<div class="t" style="left:501px;width:46px;text-align:right;top:344px">1.</div>
<div class="t" style="left:549px;width:70px;text-align:right;top:344px">7,000,000</div>
<div class="t" style="left:621px;width:49px;text-align:right;top:344px">0.</div>
<div class="t" style="left:672px;width:50px;text-align:right;top:344px">0</div>
<div class="t" style="left:724px;width:52px;text-align:right;top:344px">7,000,000</div>
<div class="t" style="left:340px;top:315px;line-height:11.6px;overflow:hidden;height:24px;white-space:normal;width:50px">WW75J42<br>33KW</div>
<div class="t" style="left:17px;width:22px;text-align:center;top:418px;color:#000;font-weight:normal">3</div>
<div class="t" style="left:391px;top:418px">Máy giặt</div>
<div class="t" style="left:479px;top:418px">Cái</div>
<div class="t" style="left:501px;width:46px;text-align:right;top:418px">1.</div>
<div class="t" style="left:549px;width:70px;text-align:right;top:418px">7,000,000</div>
<div class="t" style="left:621px;width:49px;text-align:right;top:418px">0.</div>
<div class="t" style="left:672px;width:50px;text-align:right;top:418px">0</div>
<div class="t" style="left:724px;width:52px;text-align:right;top:418px">7,000,000</div>
<div class="t" style="left:340px;top:389px;line-height:11.6px;overflow:hidden;height:24px;white-space:normal;width:50px">WW75J42<br>33KW</div>
<div class="t" style="left:17px;width:22px;text-align:center;top:491px;color:#000;font-weight:normal">4</div>
<div class="t" style="left:391px;top:491px">Máy giặt</div>
<div class="t" style="left:479px;top:491px">Cái</div>
<div class="t" style="left:501px;width:46px;text-align:right;top:491px">1.</div>
<div class="t" style="left:549px;width:70px;text-align:right;top:491px">7,000,000</div>
<div class="t" style="left:621px;width:49px;text-align:right;top:491px">0.</div>
<div class="t" style="left:672px;width:50px;text-align:right;top:491px">0</div>
<div class="t" style="left:724px;width:52px;text-align:right;top:491px">7,000,000</div>
<div class="t" style="left:340px;top:462px;line-height:11.6px;overflow:hidden;height:24px;white-space:normal;width:50px">WW75J42<br>33KW</div>
<div class="t" style="left:17px;width:22px;text-align:center;top:565px;color:#000;font-weight:normal">5</div>
<div class="t" style="left:391px;top:565px">Máy giặt</div>
<div class="t" style="left:479px;top:565px">Cái</div>
<div class="t" style="left:501px;width:46px;text-align:right;top:565px">1.</div>
<div class="t" style="left:549px;width:70px;text-align:right;top:565px">7,000,000</div>
<div class="t" style="left:621px;width:49px;text-align:right;top:565px">0.</div>
<div class="t" style="left:672px;width:50px;text-align:right;top:565px">0</div>
<div class="t" style="left:724px;width:52px;text-align:right;top:565px">7,000,000</div>
<div class="t" style="left:340px;top:536px;line-height:11.6px;overflow:hidden;height:24px;white-space:normal;width:50px">WW75J42<br>33KW</div>
<div class="t" style="left:17px;width:22px;text-align:center;top:639px;color:#000;font-weight:normal">6</div>
<div class="t" style="left:391px;top:639px">Máy giặt</div>
<div class="t" style="left:479px;top:639px">Cái</div>
<div class="t" style="left:501px;width:46px;text-align:right;top:639px">1.</div>
<div class="t" style="left:549px;width:70px;text-align:right;top:639px">7,000,000</div>
<div class="t" style="left:621px;width:49px;text-align:right;top:639px">0.</div>
<div class="t" style="left:672px;width:50px;text-align:right;top:639px">0</div>
<div class="t" style="left:724px;width:52px;text-align:right;top:639px">7,000,000</div>
<div class="t" style="left:340px;top:610px;line-height:11.6px;overflow:hidden;height:24px;white-space:normal;width:50px">WW75J42<br>33KW</div>
<div class="t" style="left:340px;top:684px;line-height:11.6px;overflow:hidden;height:18px;white-space:normal;width:50px">WW75J42<br>33KW</div>
<svg class="a" style="left:8px;top:272px" width="5" height="7" viewBox="0 0 5 7"><path d="M1 1 L4 3.5 L1 6Z" fill="#111"/></svg>
<div class="t" style="left:43px;top:486px;line-height:11.7px;letter-spacing:-0.2px">Nhà cung cấp<br>Hoàng Việt</div>
<div class="t" style="left:114px;top:462px;line-height:11.7px;letter-spacing:-0.2px">Tầng 03 Tòa nhà<br>Indochina Park<br>Tower, Số 4,<br>Nguyễn Đình Chiểu,<br>P.ĐaKao, Quận 1,<br>HCM</div>
<div class="t" style="left:207px;top:491px;letter-spacing:-0.15px">0939 55 1...</div>
<div class="t" style="left:267px;top:491px;letter-spacing:-0.3px">PMH00001-2...</div>
<div class="t" style="left:778px;width:49px;text-align:right;top:491px">0</div>
<div class="t" style="left:829px;width:50px;text-align:right;top:491px">0</div>
<div class="t" style="left:881px;width:49px;text-align:right;top:491px">0</div>
<div class="t" style="left:932px;width:63px;text-align:right;top:491px">70,000,000</div>
<div class="t" style="left:997px;width:57px;text-align:right;top:491px">0</div>
<div class="t" style="left:1056px;width:49px;text-align:right;top:491px">0.</div>
<div class="t" style="left:1110px;top:491px">DHN00002-290823</div>
<div class="t" style="left:1202px;top:491px">Administrator</div>
<div class="a" style="left:6px;top:701px;width:1308px;height:1px;background:#a9b9cd"></div>
<div class="a" style="left:6px;top:702px;width:1308px;height:19px;background:linear-gradient(#f4f7fb,#e4ebf4)"></div>
<div class="t" style="left:152px;width:110px;text-align:right;top:706px;color:#db2a30">Tổng cộng</div>
<div class="a" style="left:263px;top:705px;width:1px;height:12px;background:#a9b9cd"></div>
<div class="a" style="left:777px;top:705px;width:1px;height:12px;background:#a9b9cd"></div>
<div class="a" style="left:829px;top:705px;width:1px;height:12px;background:#a9b9cd"></div>
<div class="a" style="left:881px;top:705px;width:1px;height:12px;background:#a9b9cd"></div>
<div class="a" style="left:932px;top:705px;width:1px;height:12px;background:#a9b9cd"></div>
<div class="a" style="left:997px;top:705px;width:1px;height:12px;background:#a9b9cd"></div>
<div class="a" style="left:1056px;top:705px;width:1px;height:12px;background:#a9b9cd"></div>
<div class="t" style="left:724px;width:51px;text-align:right;top:706px;color:#db2a30">80,200,...</div>
<div class="t" style="left:778px;width:48px;text-align:right;top:706px;color:#db2a30">0</div>
<div class="t" style="left:829px;width:49px;text-align:right;top:706px;color:#db2a30">0</div>
<div class="t" style="left:881px;width:48px;text-align:right;top:706px;color:#db2a30">0</div>
<div class="t" style="left:932px;width:62px;text-align:right;top:706px;color:#db2a30">80,200,000</div>
<div class="t" style="left:997px;width:56px;text-align:right;top:706px;color:#db2a30">0</div>
<div class="a" style="left:6px;top:720px;width:1308px;height:12px;background:#dde6f1;border-top:1px solid #c9d6e5"></div>
<div class="a" style="left:17px;top:721px;width:1270px;height:10px;background:linear-gradient(#eef3f9,#cfdbea);border:1px solid #b3c3d7;border-radius:2px"></div>
<svg class="a" style="left:8px;top:722px" width="6" height="8" viewBox="0 0 6 8"><path d="M4.5 0.5 L1 4 L4.5 7.5Z" fill="#3c4a5c"/></svg>
<svg class="a" style="left:1304px;top:722px" width="6" height="8" viewBox="0 0 6 8"><path d="M1.5 0.5 L5 4 L1.5 7.5Z" fill="#3c4a5c"/></svg>
<div class="a" style="left:1302px;top:217px;width:11px;height:484px;background:#dde6f1"></div>
<div class="a" style="left:1302px;top:230px;width:11px;height:211px;background:linear-gradient(90deg,#e6edf6,#d3deeb);border:1px solid #b8c7d9;border-radius:2px"></div>
<div class="a" style="left:1305px;top:332px;width:5px;height:5px;background:#aebdd0;border:1px solid #c4d0de"></div>
<svg class="a" style="left:1303px;top:221px" width="9" height="6" viewBox="0 0 9 6"><path d="M0.5 5 L4.5 1 L8.5 5Z" fill="#3c4a5c"/></svg>
<svg class="a" style="left:1303px;top:692px" width="9" height="6" viewBox="0 0 9 6"><path d="M0.5 1 L4.5 5 L8.5 1Z" fill="#3c4a5c"/></svg>
</body></html>
